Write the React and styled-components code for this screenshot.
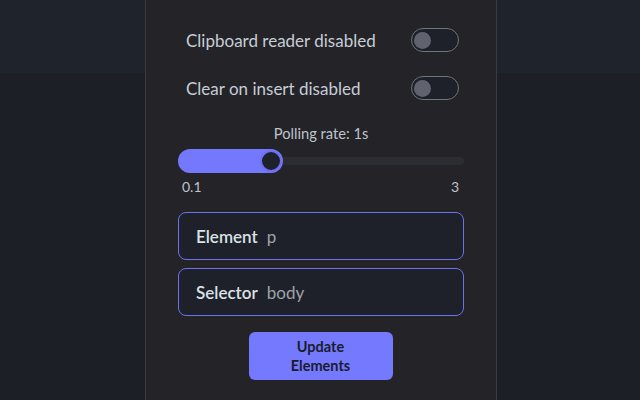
import styled, { createGlobalStyle } from "styled-components";

const GlobalStyle = createGlobalStyle`
  html, body {
    margin: 0;
    padding: 0;
    background: #1c1f26;
  }
  body {
    font-family: "Lato", "Liberation Sans", sans-serif;
  }
`;

const Page = styled.div`
  width: 640px;
  height: 400px;
  overflow: hidden;
  box-sizing: border-box;
  padding-left: 2px;
  background: linear-gradient(#1f232b 0, #1f232b 73px, #1c1f26 73px);
  display: flex;
  justify-content: center;
`;

const Panel = styled.div`
  width: 352px;
  background: #232328;
  border-left: 1px solid #3a3b42;
  border-right: 1px solid #3a3b42;
  padding: 27px 37px 0 32px;
  box-sizing: border-box;
  display: flex;
  flex-direction: column;
`;

const ToggleRow = styled.div`
  display: flex;
  align-items: center;
  justify-content: space-between;
  padding-left: 8px;
  height: 26px;
  margin-bottom: ${(p) => p.gap || 0}px;
`;

const Label = styled.span`
  font-size: 17px;
  color: #c7cdd6;
`;

const Toggle = styled.div`
  width: 48px;
  height: 24px;
  box-sizing: border-box;
  border: 1.5px solid #70737d;
  border-radius: 12px;
  background: #1e2129;
  display: flex;
  align-items: center;
  padding-left: 2px;

  &::before {
    content: "";
    width: 17px;
    height: 17px;
    border-radius: 50%;
    background: #60626d;
  }
`;

const SliderBlock = styled.div`
  margin-top: 23px;
  display: flex;
  flex-direction: column;
  margin-right: -5px;
`;

const SliderTitle = styled.div`
  text-align: center;
  font-size: 14.7px;
  color: #bfc4cc;
  margin-bottom: 7px;
`;

const Track = styled.div`
  position: relative;
  height: 24px;
  display: flex;
  align-items: center;

  &::before {
    content: "";
    position: absolute;
    left: 0;
    right: 0;
    height: 8px;
    border-radius: 4px;
    background: #2c2d33;
  }
`;

const Fill = styled.div`
  position: relative;
  height: 24px;
  border-radius: 12px;
  background: #7378fc;
`;

const Thumb = styled.div`
  position: absolute;
  right: 1px;
  top: 1px;
  width: 22px;
  height: 22px;
  box-sizing: border-box;
  border-radius: 50%;
  background: #1e2129;
  border: 2px solid #6c71f5;
`;

const Scale = styled.div`
  display: flex;
  justify-content: space-between;
  padding: 0 5px 0 4px;
  margin-top: 5px;
  font-size: 14px;
  color: #bfc4cc;
`;

const Fields = styled.div`
  margin-top: 17px;
  margin-right: -5px;
  display: flex;
  flex-direction: column;
  gap: 8px;
`;

const Field = styled.div`
  height: 48px;
  box-sizing: border-box;
  border: 1px solid #6d71ea;
  border-radius: 8px;
  background: #1e2129;
  display: flex;
  align-items: center;
  padding-left: 17px;
  gap: 9px;
  font-size: 17px;
`;

const FieldName = styled.span`
  color: #dce1e7;
  font-weight: 600;
`;

const FieldValue = styled.span`
  color: #9ea3ab;
`;

const Button = styled.button`
  align-self: center;
  margin-top: 16px;
  margin-left: 4px;
  width: 144px;
  height: 48px;
  border: none;
  border-radius: 6px;
  background: #7479fe;
  color: #1a1c2c;
  font-family: inherit;
  font-size: 14.5px;
  font-weight: 700;
  line-height: 19px;
`;

export default function App() {
  const min = 0.1;
  const max = 3;
  const value = 1;
  const pct = ((value - min) / (max - min)) * 100;

  return (
    <Page>
      <GlobalStyle />
      <Panel>
        <ToggleRow gap={22}>
          <Label>Clipboard reader disabled</Label>
          <Toggle />
        </ToggleRow>
        <ToggleRow>
          <Label>Clear on insert disabled</Label>
          <Toggle />
        </ToggleRow>

        <SliderBlock>
          <SliderTitle>Polling rate: 1s</SliderTitle>
          <Track>
            <Fill style={{ width: `calc(${pct}% + 16px)` }}>
              <Thumb />
            </Fill>
          </Track>
          <Scale>
            <span>0.1</span>
            <span>3</span>
          </Scale>
        </SliderBlock>

        <Fields>
          <Field>
            <FieldName>Element</FieldName>
            <FieldValue>p</FieldValue>
          </Field>
          <Field>
            <FieldName>Selector</FieldName>
            <FieldValue>body</FieldValue>
          </Field>
        </Fields>

        <Button>
          Update
          <br />
          Elements
        </Button>
      </Panel>
    </Page>
  );
}
